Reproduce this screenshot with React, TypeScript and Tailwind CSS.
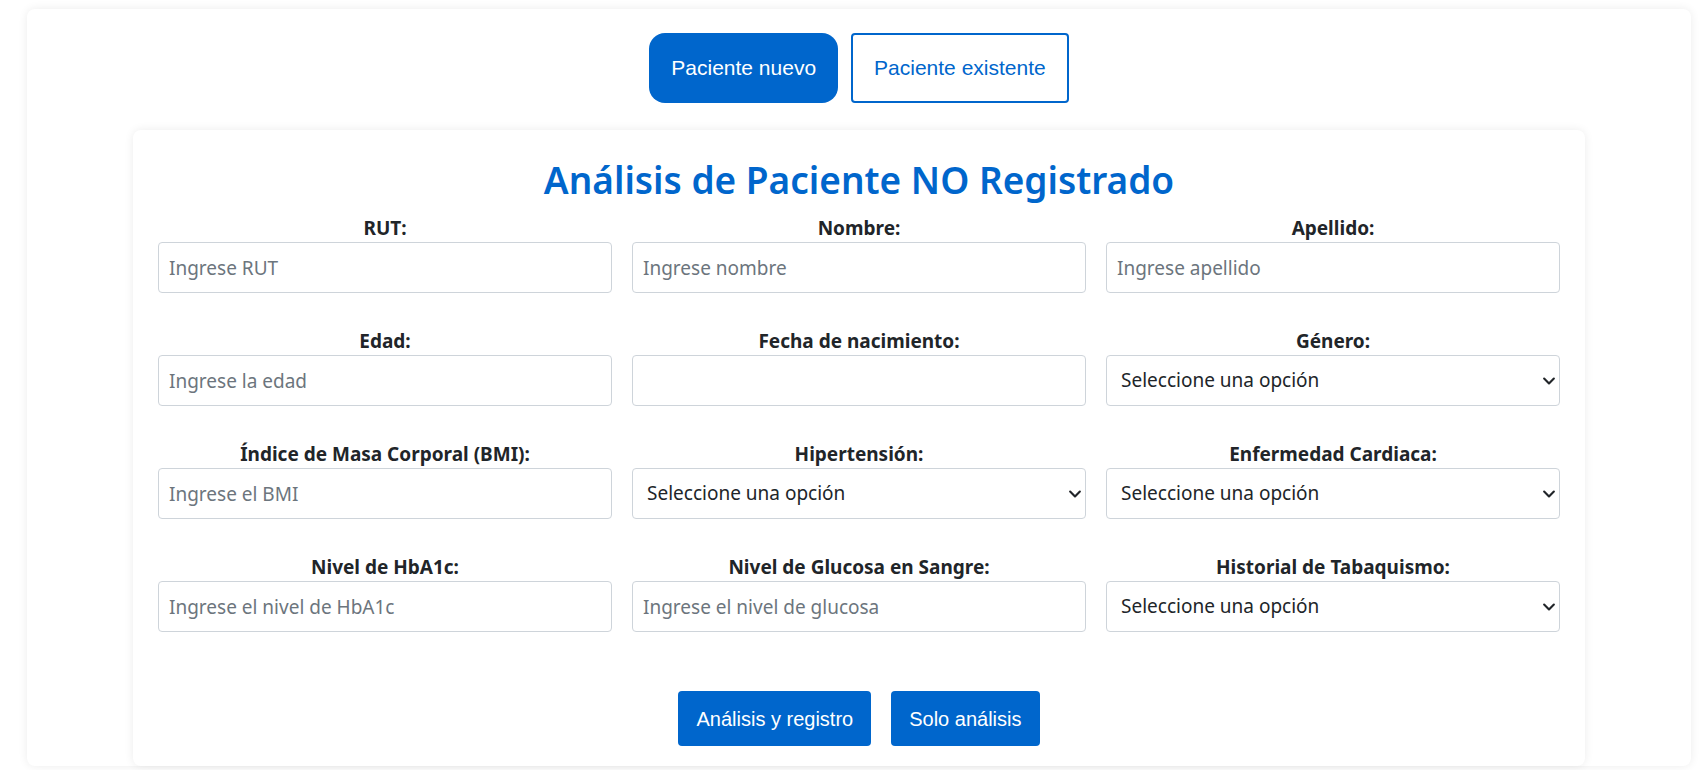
import React from 'react';

type Field = {
  label: string;
  placeholder?: string;
  type?: 'text' | 'date' | 'select';
};

const FIELDS: Field[] = [
  { label: 'RUT:', placeholder: 'Ingrese RUT' },
  { label: 'Nombre:', placeholder: 'Ingrese nombre' },
  { label: 'Apellido:', placeholder: 'Ingrese apellido' },
  { label: 'Edad:', placeholder: 'Ingrese la edad' },
  { label: 'Fecha de nacimiento:', type: 'date' },
  { label: 'Género:', type: 'select' },
  { label: 'Índice de Masa Corporal (BMI):', placeholder: 'Ingrese el BMI' },
  { label: 'Hipertensión:', type: 'select' },
  { label: 'Enfermedad Cardiaca:', type: 'select' },
  { label: 'Nivel de HbA1c:', placeholder: 'Ingrese el nivel de HbA1c' },
  { label: 'Nivel de Glucosa en Sangre:', placeholder: 'Ingrese el nivel de glucosa' },
  { label: 'Historial de Tabaquismo:', type: 'select' },
];

const Chevron = () => (
  <svg
    width="16"
    height="13"
    viewBox="0 0 16 16"
    className="pointer-events-none absolute right-[3px] top-1/2 -translate-y-1/2"
  >
    <path d="m2 5 6 6 6-6" fill="none" stroke="#212529" strokeWidth="2.6" strokeLinecap="round" strokeLinejoin="round" />
  </svg>
);

const FormField: React.FC<{ field: Field }> = ({ field }) => {
  const base =
    'w-full h-[51px] rounded-[4px] border border-[#ced4da] bg-white text-[19px] text-[#212529] outline-none';

  return (
    <div className="flex flex-col">
      <label className="mb-[2px] text-center text-[19px] leading-6 font-bold text-[#212529]">
        {field.label}
      </label>
      {field.type === 'select' ? (
        <div className="relative">
          <div className={`${base} flex items-center pl-[14px]`}>Seleccione una opción</div>
          <Chevron />
        </div>
      ) : field.type === 'date' ? (
        <div className={base} />
      ) : (
        <input
          className={`${base} px-[10px] placeholder:text-[#6c757d]`}
          placeholder={field.placeholder}
        />
      )}
    </div>
  );
};

export default function App() {
  return (
    <div className="min-h-screen bg-white pt-[9px] pl-[27px] pr-[17px] font-['Noto_Sans',sans-serif]">
      <div className="rounded-lg bg-white pt-[24px] shadow-[0_0_10px_rgba(0,0,0,0.08)]">
        {/* Tabs */}
        <div className="flex justify-center gap-[13px] font-['Liberation_Sans',Arial,sans-serif] text-[21px]">
          <button className="h-[70px] rounded-[16px] bg-[#0066cc] px-[22px] text-white">
            Paciente nuevo
          </button>
          <button className="h-[70px] rounded-[4px] border-2 border-[#0066cc] bg-white px-[21px] text-[#0066cc]">
            Paciente existente
          </button>
        </div>

        <div className="mx-[106px] mt-[27px] rounded-lg bg-white px-[25px] pt-[26px] pb-[20px] shadow-[0_0_10px_rgba(0,0,0,0.08)]">
          <h2 className="mb-3 text-center text-[37px] leading-[48px] font-semibold text-[#0066cc]">
            Análisis de Paciente NO Registrado
          </h2>

          <div className="grid grid-cols-3 gap-x-5 gap-y-[36px]">
            {FIELDS.map((f) => (
              <FormField key={f.label} field={f} />
            ))}
          </div>

          <div className="mt-[59px] flex justify-center gap-[20px] font-['Liberation_Sans',Arial,sans-serif] text-[20px] text-white">
            <button className="h-[55px] rounded-[4px] bg-[#0066cc] px-[18px]">Análisis y registro</button>
            <button className="h-[55px] rounded-[4px] bg-[#0066cc] px-[18px]">Solo análisis</button>
          </div>
        </div>
      </div>
    </div>
  );
}
